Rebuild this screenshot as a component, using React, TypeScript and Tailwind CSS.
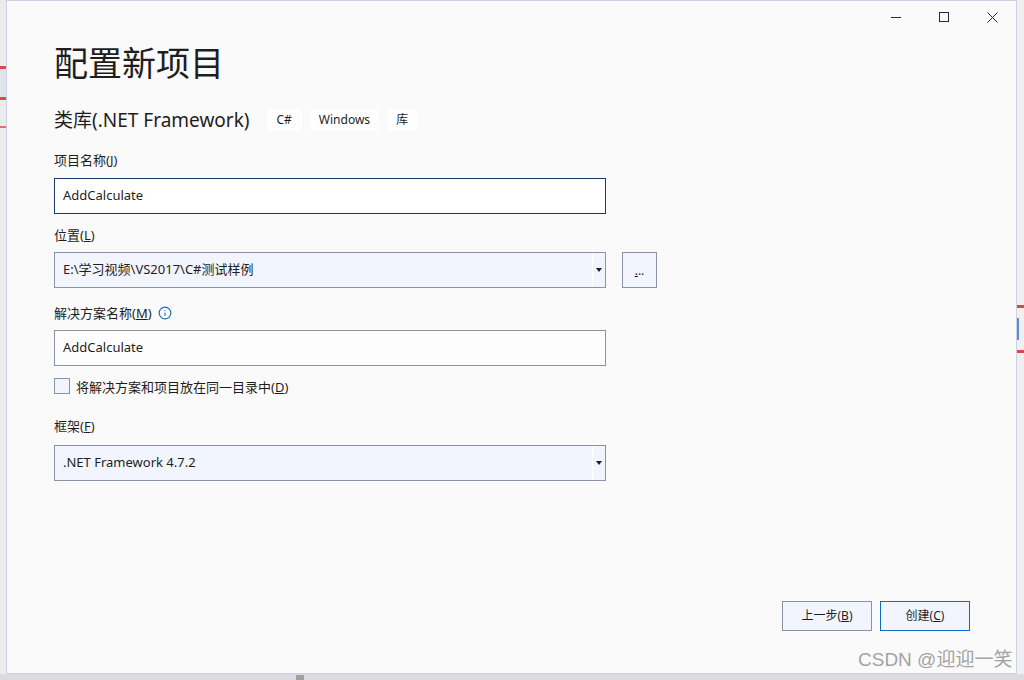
import { Info } from 'lucide-react';

const font = { fontFamily: '"Noto Sans", "Noto Sans CJK SC", sans-serif' };

function Field({ label, children }: { label: React.ReactNode; children: React.ReactNode }) {
  return (
    <div className="flex flex-col">
      <div className="h-[18px] flex items-center text-[13px] text-[#1e1e1e] leading-none">{label}</div>
      {children}
    </div>
  );
}

function Combo({ value }: { value: string }) {
  return (
    <div className="w-[552px] h-[36px] flex border border-[#8a93a6] bg-[#f2f5fd]">
      <div className="flex-1 flex items-center pl-2 text-[13px] text-[#1e1e1e]">{value}</div>
      <div className="w-[13px] border-l border-white flex items-center justify-center">
        <svg width="6" height="4" viewBox="0 0 6 4">
          <path d="M0 0 H6 L3 4 Z" fill="#1e1e1e" />
        </svg>
      </div>
    </div>
  );
}

export default function App() {
  return (
    <div className="w-[1024px] h-[680px] overflow-hidden relative bg-[#dcdce0] flex" style={font}>
      {/* background window strip left */}
      <div className="w-[6px] h-[674px] bg-[#ececef] flex flex-col">
        <div className="h-[66px]" />
        <div className="h-[3px] bg-[#e04848]" />
        <div className="h-[28px] bg-[#dfe3ec]" />
        <div className="h-[3px] bg-[#e04848]" />
        <div className="h-[26px]" />
        <div className="h-[2px] bg-[#e07070]" />
      </div>

      <div className="w-[1011px] h-[674px] bg-[#fafafb] border border-[#cfd0e2] flex flex-col relative">
        {/* title bar */}
        <div className="h-[32px] flex justify-end text-[#1e1e1e]">
          <div className="w-12 flex items-center justify-center">
            <div className="w-[10px] h-[1px] bg-[#1e2a3a]" />
          </div>
          <div className="w-12 flex items-center justify-center">
            <div className="w-[10px] h-[10px] border border-[#1e2a3a]" />
          </div>
          <div className="w-12 flex items-center justify-center">
            <svg width="11" height="11" viewBox="0 0 11 11">
              <path d="M0.5 0.5 L10.5 10.5 M10.5 0.5 L0.5 10.5" stroke="#1e2a3a" strokeWidth="1" />
            </svg>
          </div>
        </div>

        <div className="pl-[47px] flex flex-col flex-1">
          <div className="mt-[10px] h-[40px] flex items-center text-[34px] text-[#1e1e1e] leading-none">配置新项目</div>

          <div className="mt-[23px] h-[28px] flex items-center gap-[17px]">
            <span className="text-[19px] text-[#1e1e1e] leading-none">类库(.NET Framework)</span>
            <div className="flex gap-2">
              <span className="h-[22px] px-[10px] flex items-center bg-white rounded text-[12px] text-[#1e1e1e]">C#</span>
              <span className="h-[22px] px-[9px] flex items-center bg-white rounded text-[12px] text-[#1e1e1e]">Windows</span>
              <span className="h-[22px] px-[9px] flex items-center bg-white rounded text-[12px] text-[#1e1e1e]">库</span>
            </div>
          </div>

          <div className="mt-[17px] flex flex-col gap-[10px]">
            <Field label={<>项目名称(<span className="underline">J</span>)</>}>
              <div className="mt-[9px] w-[552px] h-[36px] border border-[#1f3a70] bg-white flex items-center pl-2 text-[13px] text-[#1e1e1e]">
                AddCalculate
              </div>
            </Field>

            <div className="mt-[2px]">
              <Field label={<>位置(<span className="underline">L</span>)</>}>
                <div className="mt-[8px] flex gap-[16px]">
                  <Combo value="E:\学习视频\VS2017\C#测试样例" />
                  <div className="w-[35px] h-[36px] border border-[#8a93a6] bg-[#f2f5fd] flex items-center justify-center text-[12px] text-[#1e1e1e]">
                    <span className="pt-[2px]"><span className="underline">.</span>..</span>
                  </div>
                </div>
              </Field>
            </div>

            <div className="mt-[6px]">
              <Field
                label={
                  <span className="flex items-center gap-[6px]">
                    <span>解决方案名称(<span className="underline">M</span>)</span>
                    <Info className="w-[14px] h-[14px] text-[#1a6fb5]" strokeWidth={2} />
                  </span>
                }
              >
                <div className="mt-[8px] w-[552px] h-[36px] border border-[#8a93a6] bg-[#fdfdfd] flex items-center pl-2 text-[13px] text-[#1e1e1e]">
                  AddCalculate
                </div>
              </Field>
            </div>

            <div className="mt-[-2px] flex items-center gap-[6px]">
              <div className="w-[16px] h-[16px] border border-[#8a93a6] bg-[#f2f5fd]" />
              <span className="text-[13px] text-[#1e1e1e] pt-[4px]">将解决方案和项目放在同一目录中(<span className="underline">D</span>)</span>
            </div>

            <div className="mt-[10px]">
              <Field label={<>框架(<span className="underline">F</span>)</>}>
                <div className="mt-[9px]">
                  <Combo value=".NET Framework 4.7.2" />
                </div>
              </Field>
            </div>
          </div>

          <div className="flex-1" />

          <div className="flex justify-end gap-[8px] pr-[46px] pb-[42px]">
            <button className="w-[90px] h-[30px] border border-[#8a93a6] bg-[#f2f5fd] text-[12px] text-[#1e1e1e] flex items-center justify-center">
              上一步(<span className="underline">B</span>)
            </button>
            <button className="w-[90px] h-[30px] border border-[#0e6cc4] bg-[#f2f5fd] text-[12px] text-[#1e1e1e] flex items-center justify-center">
              创建(<span className="underline">C</span>)
            </button>
          </div>
        </div>
      </div>

      {/* background window strip right */}
      <div className="w-[7px] h-[674px] bg-[#f0f0f2] flex flex-col">
        <div className="h-[305px]" />
        <div className="h-[3px] bg-[#e04848]" />
        <div className="h-[10px]" />
        <div className="h-[22px] border-l-2 border-[#5b8fd0]" />
        <div className="h-[10px]" />
        <div className="h-[3px] bg-[#e04848]" />
      </div>

      <div className="absolute left-[296px] top-[675px] w-[8px] h-[5px] bg-[#a0a0a0]" />

      <div
        className="absolute left-[858px] top-[650px] text-[19px] text-[#a3a3a3] leading-none"
        style={{ fontFamily: '"Liberation Sans", "Noto Sans CJK SC", sans-serif' }}
      >
        CSDN @迎迎一笑
      </div>
    </div>
  );
}
